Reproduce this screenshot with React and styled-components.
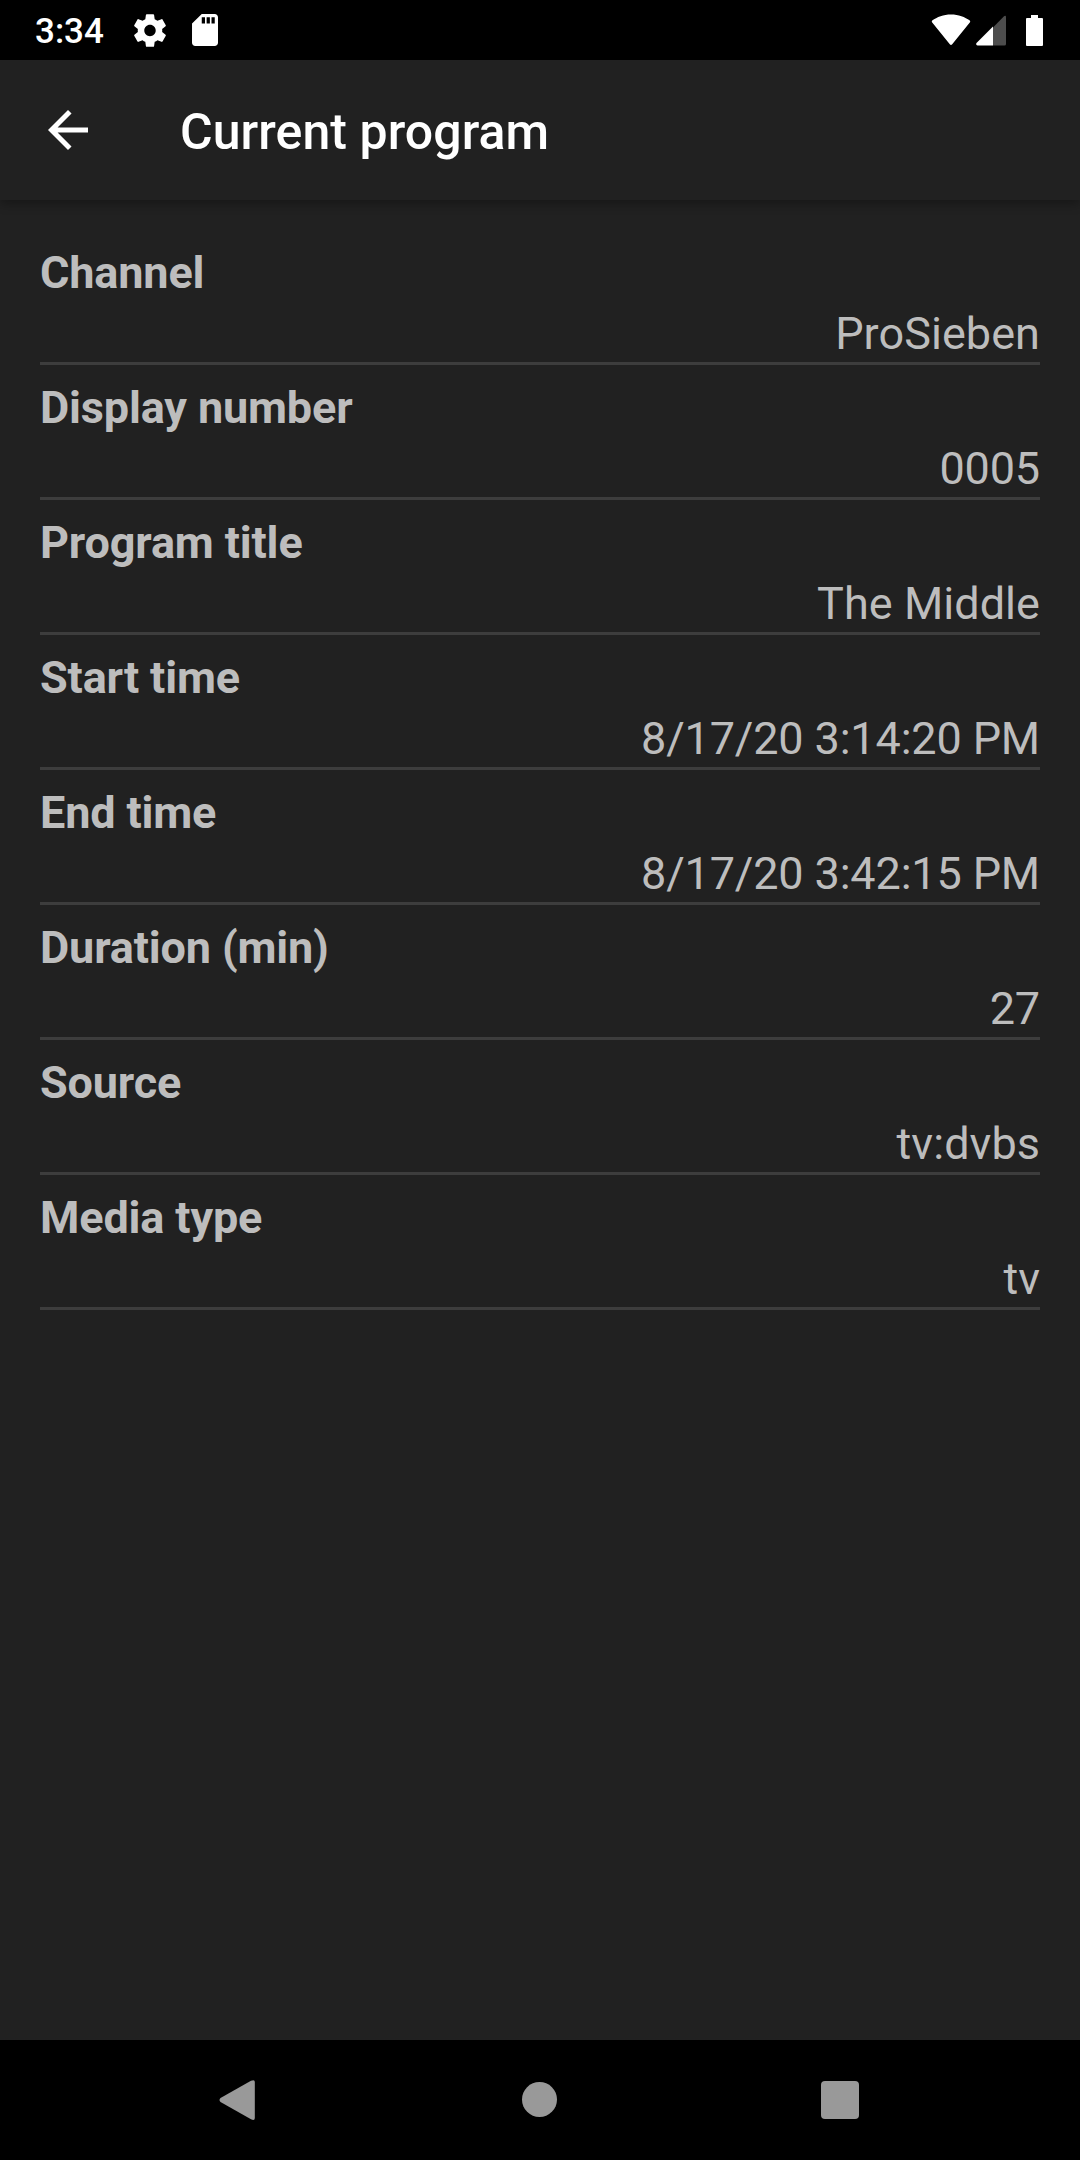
import React from "react";
import styled, { createGlobalStyle } from "styled-components";

const GlobalStyle = createGlobalStyle`
  * { box-sizing: border-box; }
  body { margin: 0; background: #212121; }
`;

const Screen = styled.div`
  display: flex;
  flex-direction: column;
  width: 1080px;
  height: 2160px;
  background: #212121;
  color: #bdbdbd;
  font-family: Roboto, "Noto Sans", sans-serif;
  overflow: hidden;
`;

const StatusBar = styled.header`
  display: flex;
  justify-content: space-between;
  flex: 0 0 60px;
  padding: 0 37px 0 35px;
  background: #000;
  color: #fff;
`;

const StatusGroup = styled.div`
  display: flex;
  align-items: center;
`;

const Clock = styled.time`
  font-size: 35px;
  font-weight: 500;
  line-height: 41px;
  padding-top: 2px;
  width: 98px;
`;

const Icon = styled.svg`
  display: block;
  flex: none;
  fill: currentColor;
  width: ${(p) => p.$w}px;
  height: ${(p) => p.$h}px;
  margin-left: ${(p) => p.$gap || 0}px;
`;

const Toolbar = styled.nav`
  display: flex;
  align-items: center;
  flex: 0 0 140px;
  padding-left: 38px;
  color: #fff;
  background: #212121;
  box-shadow: 0 4px 10px rgba(0, 0, 0, 0.3);
`;

const BackButton = styled.button`
  display: flex;
  padding: 0;
  border: 0;
  background: none;
  color: inherit;
`;

const Title = styled.h1`
  margin: 4px 0 0 82px;
  font-size: 50px;
  font-weight: 500;
  line-height: 58px;
  letter-spacing: 0.07px;
`;

const Details = styled.dl`
  flex: 1;
  margin: 0;
  padding: 30px 40px 0;
`;

const Row = styled.div`
  display: flex;
  flex-direction: column;
  gap: 4px;
  height: 135px;
  padding-top: 14px;
  border-bottom: 3px solid #3d3d3d;
  font-size: 45px;
  line-height: 57px;
`;

const Label = styled.dt`
  font-weight: 700;
  letter-spacing: -0.15px;
`;

const Value = styled.dd`
  margin: 0;
  text-align: right;
  letter-spacing: ${(p) => (p.$numeric ? "-0.16px" : "0.05px")};
`;

const NavBar = styled.footer`
  display: flex;
  align-items: center;
  justify-content: space-between;
  flex: 0 0 120px;
  padding: 0 210px;
  background: #000;
  color: #999;
`;

const rows = [
  ["Channel", "ProSieben"],
  ["Display number", "0005"],
  ["Program title", "The Middle"],
  ["Start time", "8/17/20 3:14:20 PM"],
  ["End time", "8/17/20 3:42:15 PM"],
  ["Duration (min)", "27"],
  ["Source", "tv:dvbs"],
  ["Media type", "tv"],
];

export default function App() {
  return (
    <>
      <GlobalStyle />
      <Screen>
        <StatusBar>
          <StatusGroup>
            <Clock>3:34</Clock>
            <Icon $w={32} $h={33} $gap={0.5} viewBox="2.2 2 19.6 20">
              <path d="M19.43 12.98c.04-.32.07-.64.07-.98s-.03-.66-.07-.98l2.11-1.65c.19-.15.24-.42.12-.64l-2-3.46c-.12-.22-.39-.3-.61-.22l-2.49 1c-.52-.4-1.08-.73-1.69-.98l-.38-2.65C14.46 2.18 14.25 2 14 2h-4c-.25 0-.46.18-.49.42l-.38 2.65c-.61.25-1.17.59-1.69.98l-2.49-1c-.23-.09-.49 0-.61.22l-2 3.46c-.13.22-.07.49.12.64l2.11 1.65c-.04.32-.07.65-.07.98s.03.66.07.98l-2.11 1.65c-.19.15-.24.42-.12.64l2 3.46c.12.22.39.3.61.22l2.49-1c.52.4 1.08.73 1.69.98l.38 2.65c.03.24.24.42.49.42h4c.25 0 .46-.18.49-.42l.38-2.65c.61-.25 1.17-.59 1.69-.98l2.49 1c.23.09.49 0 .61-.22l2-3.46c.12-.22.07-.49-.12-.64l-2.11-1.65zM12 15.5c-1.93 0-3.5-1.57-3.5-3.5s1.57-3.5 3.5-3.5 3.5 1.57 3.5 3.5-1.57 3.5-3.5 3.5z" />
            </Icon>
            <Icon $w={26} $h={32} $gap={26} viewBox="4 2 16 20" preserveAspectRatio="none">
              <path d="M18 2h-8L4.02 8 4 20c0 1.1.9 2 2 2h12c1.1 0 2-.9 2-2V4c0-1.1-.9-2-2-2zm-6 6h-2V4h2v4zm3 0h-2V4h2v4zm3 0h-2V4h2v4z" />
            </Icon>
          </StatusGroup>
          <StatusGroup>
            <Icon $w={40} $h={32} $gap={0} viewBox="0 0 40 32">
              <path d="M20 .5C12.500.5 6 3 1.200 6.600Q.4 7.300 1 8.200L18.800 30.200Q20 31.700 21.200 30.200L39 8.200Q39.600 7.300 38.800 6.600C34 3 27.500.5 20 .5Z" />
            </Icon>
            <Icon $w={31} $h={31} $gap={5} viewBox="0 0 31 31">
              <path fill="#4d4d4d" d="M17 12.500 28 1.200Q30 0 30 2.200V29Q30 30.500 28.500 30.500H17Z" />
              <path d="M17 11.500V30.500H1.500Q-.5 30 .5 28Z" />
            </Icon>
            <Icon $w={17} $h={31} $gap={19} viewBox="0 0 17 31">
              <path d="M5 0H12V3H16Q17 3 17 4V30Q17 31 16 31H1Q0 31 0 30V4Q0 3 1 3H5Z" />
            </Icon>
          </StatusGroup>
        </StatusBar>
        <Toolbar>
          <BackButton aria-label="Navigate up">
            <Icon $w={60} $h={60} viewBox="0 0 24 24">
              <path d="M20 11H7.830l5.590-5.590L12 4l-8 8 8 8 1.410-1.410L7.830 13H20v-2z" />
            </Icon>
          </BackButton>
          <Title>Current program</Title>
        </Toolbar>
        <Details>
          {rows.map(([label, value]) => (
            <Row key={label}>
              <Label>{label}</Label>
              <Value $numeric={/^\d/.test(value)}>{value}</Value>
            </Row>
          ))}
        </Details>
        <NavBar>
          <Icon $w={60} $h={60} viewBox="0 0 60 60">
            <path d="M10.500 28 41 10.800Q44.800 9 44.800 12V48Q44.800 51 41 49.200L10.500 32Q8.500 30 10.500 28Z" />
          </Icon>
          <Icon $w={60} $h={60} viewBox="0 0 60 60">
            <circle cx="29.500" cy="29.500" r="17.500" />
          </Icon>
          <Icon $w={60} $h={60} viewBox="0 0 60 60">
            <rect x="11" y="11" width="38" height="38" rx="4" />
          </Icon>
        </NavBar>
      </Screen>
    </>
  );
}
